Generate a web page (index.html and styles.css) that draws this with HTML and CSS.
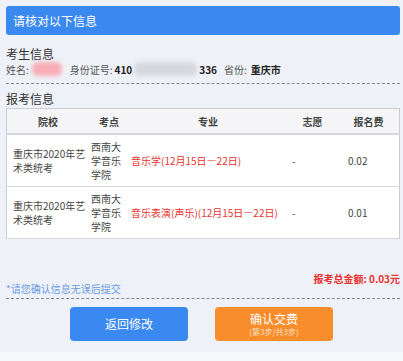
FILE: index.html
```html
<!DOCTYPE html>
<html lang="zh">
<head>
    <meta charset="UTF-8">
    <meta name="viewport" content="width=device-width, initial-scale=1.0">
    <title>请核对以下信息</title>
    <link rel="stylesheet" href="styles.css">
</head>
<body>
    <div class="page">
        <!-- Title bar -->
        <div class="title-bar">请核对以下信息</div>

        <!-- Candidate info -->
        <div class="section-title first">考生信息</div>
        <div class="info-row">
            <span class="label">姓名:</span>
            <span class="blur blur-name"></span>
            <span class="label id-label">身份证号:</span>
            <span class="value">410</span>
            <span class="blur blur-id"></span>
            <span class="value">336</span>
            <span class="label prov-label">省份:</span>
            <span class="value">重庆市</span>
        </div>
        <div class="dotted"></div>

        <!-- Exam info -->
        <div class="section-title">报考信息</div>
        <table class="exam-table">
            <thead>
                <tr>
                    <th class="col-school">院校</th>
                    <th class="col-site">考点</th>
                    <th class="col-major">专业</th>
                    <th class="col-wish">志愿</th>
                    <th class="col-fee">报名费</th>
                </tr>
            </thead>
            <tbody>
                <tr>
                    <td class="col-school">重庆市2020年艺术类统考</td>
                    <td class="col-site">西南大学音乐学院</td>
                    <td class="col-major red">音乐学(12月15日—22日)</td>
                    <td class="col-wish">-</td>
                    <td class="col-fee">0.02</td>
                </tr>
                <tr>
                    <td class="col-school">重庆市2020年艺术类统考</td>
                    <td class="col-site">西南大学音乐学院</td>
                    <td class="col-major red">音乐表演(声乐)(12月15日—22日)</td>
                    <td class="col-wish">-</td>
                    <td class="col-fee">0.01</td>
                </tr>
            </tbody>
        </table>

        <div class="total">报考总金额: 0.03元</div>
        <div class="notice">*请您确认信息无误后提交</div>
        <div class="dotted tight"></div>

        <!-- Actions -->
        <div class="actions">
            <button class="btn btn-back">返回修改</button>
            <button class="btn btn-pay">确认交费<span class="step">(第3步/共3步)</span></button>
        </div>
    </div>
</body>
</html>
```

FILE: styles.css
```css
/* Global Styling */
body {
    margin: 0;
    background-color: #f7f8fc;
    font-family: "Noto Sans CJK SC", "Noto Sans", sans-serif;
    color: #333;
}
.page {
    background-color: #eef1f7;
    padding: 6px 3px 11px 6px;
}
/* Title Bar */
.title-bar {
    background-color: #3a89f1;
    color: #fff;
    height: 29px;
    line-height: 29px;
    padding-left: 7px;
    font-size: 12px;
    border-radius: 3px;
}
/* Sections */
.section-title {
    font-size: 12px;
    line-height: 16px;
    color: #333;
    margin-top: 7px;
}
.section-title.first {
    margin-top: 11px;
}
.info-row {
    display: flex;
    align-items: center;
    font-size: 10px;
    height: 16px;
    margin-top: -1px;
}
.label {
    color: #555;
}
.value {
    font-weight: bold;
    color: #222;
}
.id-label {
    margin-left: 8px;
    margin-right: 2px;
}
.prov-label {
    margin-left: 7px;
    margin-right: 4px;
}
.blur {
    display: inline-block;
    height: 14px;
    border-radius: 6px;
    filter: blur(2px);
}
.blur-name {
    width: 30px;
    margin-left: 3px;
    background-color: #f8adb7;
}
.blur-id {
    width: 63px;
    margin: 0 2px;
    background-color: #d6d8de;
}
.dotted {
    border-top: 1px dashed #888;
    margin-top: 6px;
}
.dotted.tight {
    margin-top: 2px;
}
/* Exam Table */
.exam-table {
    width: 100%;
    border-collapse: collapse;
    background-color: #fff;
    border: 1px solid #c9ccd3;
    font-size: 10px;
    margin-top: 1px;
    table-layout: fixed;
}
.exam-table th {
    background-color: #f5f5f7;
    font-weight: bold;
    color: #444;
    height: 24px;
    padding: 0;
    text-align: center;
    border-bottom: 2px solid #d6d8de;
}
.exam-table td {
    height: 51px;
    line-height: 14px;
    padding: 0 4px;
    color: #444;
    border-bottom: 1px solid #d6d8de;
}
.exam-table .col-school {
    width: 82px;
}
.exam-table td.col-school {
    padding: 0 1px 0 6px;
}
.exam-table .col-site {
    width: 40px;
}
.exam-table td.col-site {
    padding: 0 6px 0 2px;
}
.exam-table .col-major {
    width: 158px;
}
.exam-table td.col-major {
    padding: 0 2px;
}
.exam-table .col-wish {
    width: 51px;
}
.exam-table td.col-wish {
    padding-left: 5px;
}
.exam-table td.col-fee {
    padding-left: 10px;
}
.red {
    color: #e8322f !important;
}
/* Totals */
.total {
    text-align: right;
    color: #e8322f;
    font-size: 10px;
    font-weight: bold;
    margin-top: 33px;
    line-height: 14px;
}
.notice {
    color: #6c9ee3;
    font-size: 10px;
    line-height: 14px;
    margin-top: -4px;
}
/* Buttons */
.actions {
    display: flex;
    justify-content: center;
    gap: 27px;
    padding-right: 3px;
    margin-top: 8px;
}
.btn {
    width: 118px;
    height: 34px;
    border: none;
    border-radius: 4px;
    color: #fff;
    font-family: inherit;
    font-size: 12px;
    cursor: pointer;
    display: flex;
    flex-direction: column;
    align-items: center;
    justify-content: center;
    line-height: 14px;
}
.btn-back {
    background-color: #3a89f1;
}
.btn-pay {
    background-color: #f98d2b;
}
.step {
    font-size: 8px;
    line-height: 11px;
    color: #fde3cb;
}
```
